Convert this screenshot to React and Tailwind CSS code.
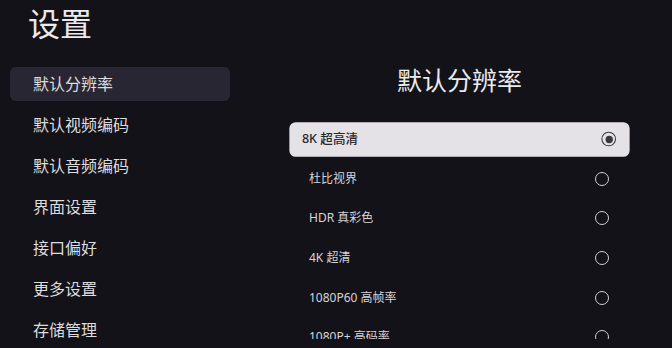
import { useState } from "react";

const menu = [
  "默认分辨率",
  "默认视频编码",
  "默认音频编码",
  "界面设置",
  "接口偏好",
  "更多设置",
  "存储管理",
];

const options = [
  "8K 超高清",
  "杜比视界",
  "HDR 真彩色",
  "4K 超清",
  "1080P60 高帧率",
  "1080P+ 高码率",
];

const Radio = ({ checked }) =>
  checked ? (
    <span className="w-[14px] h-[14px] rounded-full border-[1.5px] border-[#3a383e] flex items-center justify-center">
      <span className="w-[7px] h-[7px] rounded-full bg-[#3a383e]" />
    </span>
  ) : (
    <span className="w-[14px] h-[14px] rounded-full border-[1.5px] border-[#d2d1d4]" />
  );

const App = () => {
  const [section] = useState(0);
  const [choice, setChoice] = useState(0);

  return (
    <div className="w-[672px] h-[348px] overflow-hidden bg-[#131218] font-['Noto_Sans','Noto_Sans_CJK_SC',sans-serif] text-[#dddcdf]">
      <h1 className="pt-[4px] pl-[28px] text-[32px] leading-[40px] font-normal text-[#ebeaed]">
        设置
      </h1>
      <div className="flex mt-[19px]">
        {/* left menu */}
        <div className="w-[220px] ml-[10px] pt-[4px] flex flex-col gap-[7px]">
          {menu.map((item, i) => (
            <div
              key={item}
              className={`h-[34px] shrink-0 flex items-center pl-[23px] rounded-md text-[16px] ${
                i === section ? "bg-[#282632]" : ""
              }`}
            >
              {item}
            </div>
          ))}
        </div>

        {/* right panel */}
        <div className="ml-[55px] w-[349px] h-[276px] overflow-hidden px-[12px] flex flex-col">
          <p className="h-[34px] shrink-0 leading-[34px] text-center text-[25px] text-[#ebeaed]">
            默认分辨率
          </p>
          <div className="mt-[26px] flex flex-col gap-[7.1px]">
            {options.map((opt, i) => (
              <div
                key={opt}
                onClick={() => setChoice(i)}
                className={`h-[32.5px] shrink-0 flex items-center justify-between pl-[12px] pr-[13px] rounded-md text-[12px] ${
                  i === choice
                    ? "bg-[#e5e2e7] text-[#29282d] font-medium scale-[1.047]"
                    : "text-[#d6d5d8]"
                }`}
              >
                <span>{opt}</span>
                <Radio checked={i === choice} />
              </div>
            ))}
          </div>
        </div>
      </div>
    </div>
  );
};

export default App;
